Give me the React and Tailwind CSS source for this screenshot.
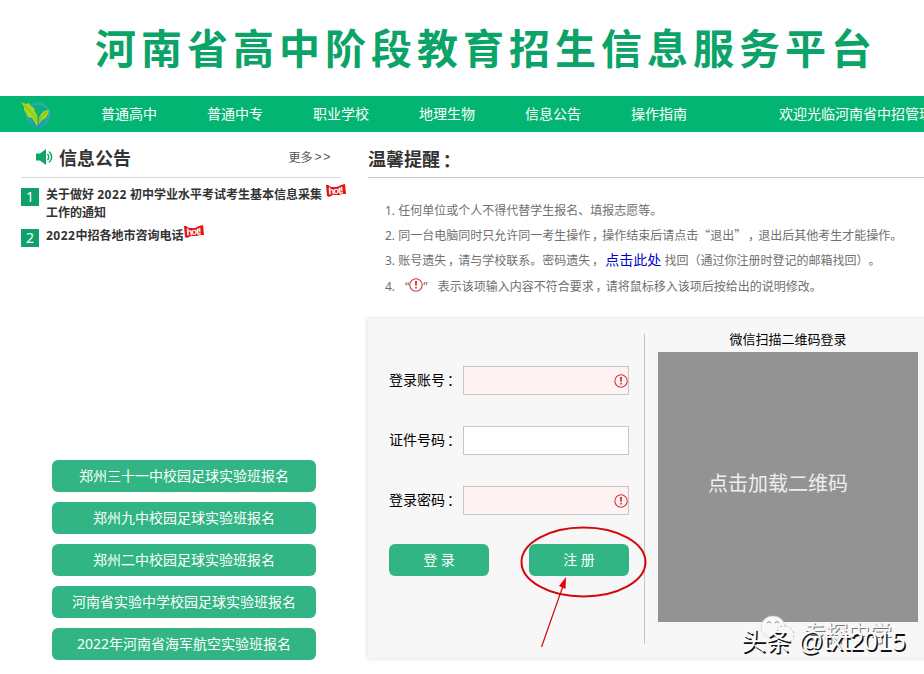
const navItems = ['普通高中', '普通中专', '职业学校', '地理生物', '信息公告', '操作指南'];

const signups = [
  '郑州三十一中校园足球实验班报名',
  '郑州九中校园足球实验班报名',
  '郑州二中校园足球实验班报名',
  '河南省实验中学校园足球实验班报名',
  '2022年河南省海军航空实验班报名',
];

// Centred full-width colon
const Colon = () => (
  <span className="inline-block w-[1em] indent-[0.150em] font-['Noto_Sans_CJK_SC',sans-serif]">：</span>
);

// Full-width comma, centred in its cell
const Comma = () => (
  <span className="inline-block w-[1em] indent-[0.150em] font-['Noto_Sans_CJK_SC',sans-serif]">，</span>
);

// Full-width quotation marks
const Q = ({ children }) => (
  <span className="inline-block w-[1em] font-['Noto_Sans_CJK_SC',sans-serif]">{children}</span>
);

const Logo = () => (
  <svg width="32" height="30" viewBox="0 0 32 30" className="block shrink-0">
    <circle cx="18" cy="15.500" r="11" fill="#12ad82" stroke="#35a9c4" strokeWidth="2.500" opacity="0.750" />
    <path d="M8 21c5 5 14 5 19 0-4 8-15 9-19 0z" fill="#2f8fd0" />
    <path d="M1 3l5 2 3-1 2 3 3 2 1 4 2 3 1 8-1 3-5-8-4-1-2-4-2-3 0-3z" fill="#a5d622" />
    <path d="M29 11l-5 1-3 3-2 4 0 6 3-4 4-2 2-4z" fill="#a5d622" />
    <path d="M4 6l9 9 5 9M27 13l-6 5-3 6" stroke="#6fb31d" strokeWidth="0.800" fill="none" />
  </svg>
);

const Speaker = () => (
  <svg width="17" height="16" viewBox="0 0 17 16" className="-mt-0.5 block">
    <path d="M0 4.500h4L10 0v16l-6-4.500H0z" fill="#0ea56b" />
    <path d="M11.500 5c1.500 1.500 1.500 4.500 0 6M13 2.500c3.500 3 3.500 8 0 11" stroke="#0ea56b" strokeWidth="1.500" fill="none" />
  </svg>
);

const Hot = () => (
  <svg width="20" height="13" viewBox="0 0 20 13" className="-mt-[2px] ml-px inline-block align-top">
    <path d="M0 1l2 0 3 2 6 0 4-2 4-1 1 10-4 0-3 1-6 0-4 2-2-1z" fill="#e01515" />
    <text x="2.500" y="10" fontSize="9.500" fontWeight="bold" fill="#fff" fontFamily="Liberation Sans, sans-serif" transform="rotate(-4 9 6)" textLength="15">hot!</text>
  </svg>
);

const Warn = () => (
  <svg width="14" height="14" viewBox="0 0 14 14" className="block shrink-0">
    <circle cx="7" cy="7" r="6.200" fill="none" stroke="#cf3a3a" strokeWidth="1.100" />
    <path d="M6 3h2l-.4 5h-1.200zM6.200 9h1.600v1.600H6.200z" fill="#d02525" />
  </svg>
);

const Field = ({ label, invalid }) => (
  <div className="flex h-[29px] items-center">
    <label className="w-[74px] pb-0.5 text-sm text-black">{label}<Colon /></label>
    <div className={`flex h-[29px] w-[166px] items-center justify-end border border-[#c6c6c6] ${invalid ? 'bg-[#fff2f2]' : 'bg-white'}`}>
      {invalid && <Warn />}
    </div>
  </div>
);

const News = ({ num, children }) => (
  <li className="flex gap-[7px]">
    <span className="mt-[2px] flex size-[18px] shrink-0 items-center justify-center bg-[#0fa169] text-sm text-white">{num}</span>
    <div className="whitespace-nowrap text-xs/[18px] font-bold text-[#333]">{children}</div>
  </li>
);

const Sidebar = () => (
  <aside className="flex w-[341px] flex-col pl-[21px]">
    <div className="flex h-[46px] items-center border-b border-[#d9d9d9] pt-[6px] pl-[15px]">
      <Speaker />
      <h2 className="ml-[6px] text-lg font-bold text-[#333]">信息公告</h2>
      <a className="mr-[9px] ml-auto flex text-xs text-[#555]">
        更多<span className="ml-0.5 font-['Liberation_Mono',monospace] tracking-[1.500px]">&gt;&gt;</span>
      </a>
    </div>
    <ul className="mt-[8px] flex h-[274px] flex-col gap-[5px]">
      <News num={1}>
        关于做好 <span className="tracking-[0.600px]">2022</span> 初中学业水平考试考生基本信息采集<span className="ml-[3px]"><Hot /></span>
        <br />
        工作的通知
      </News>
      <News num={2}><span className="tracking-[0.500px]">2022</span>中招各地市咨询电话<Hot /></News>
    </ul>
    <div className="ml-[31px] flex w-[264px] flex-col gap-2.5">
      {signups.map((name) => (
        <a key={name} className="flex h-8 items-center justify-center rounded-md bg-[#31b585] text-sm text-white">
          {name}
        </a>
      ))}
    </div>
  </aside>
);

const Notice = () => (
  <section>
    <h2 className="flex h-[46px] items-center border-b border-[#c8c8c8] pt-[8px] text-lg font-bold text-[#333]">
      温馨提醒<Colon />
    </h2>
    <div className="mt-[20px] ml-[17px] whitespace-nowrap text-xs text-[#707070]">
      <p className="h-[24px] leading-[25px]">1. 任何单位或个人不得代替学生报名、填报志愿等。</p>
      <p className="h-[25px] leading-[25px]">
        2. 同一台电脑同时只允许同一考生操作<Comma />操作结束后请点击<Q>“</Q>退出<Q>”</Q><Comma />退出后其他考生才能操作。
      </p>
      <p className="h-[26px] leading-[26px]">
        3. 账号遗失<Comma />请与学校联系。密码遗失<Comma /> <a className="text-sm/[26px] text-[#0000cc]">点击此处</a> 找回<Q>（</Q>通过你注册时登记的邮箱找回<Q>）</Q>。
      </p>
      <div className="flex h-[27px] items-center">
        <span className="w-[20px]">4.</span>
        <span>“</span>
        <span className="-mt-[3px]"><Warn /></span>
        <span className="mr-[10px]">”</span>
        <span>表示该项输入内容不符合要求<Comma />请将鼠标移入该项后按给出的说明修改。</span>
      </div>
    </div>
  </section>
);

const Login = () => (
  <section className="mt-[19px] flex h-[339px] w-[580px] bg-[#f7f7f7] shadow-[0_0_5px_#d8d8d8]">
    <div className="mt-[15px] flex h-[310px] w-[277px] flex-col border-r border-[#c5c5c5] pt-[32px] pl-[21px]">
      <div className="flex flex-col gap-[31px]">
        <Field label="登录账号" invalid />
        <Field label="证件号码" />
        <Field label="登录密码" invalid />
      </div>
      <div className="mt-[29px] flex gap-10">
        <button className="h-8 w-[100px] rounded-md bg-[#31b585] text-sm text-white">登 录</button>
        <button className="h-8 w-[100px] rounded-md bg-[#31b585] text-sm text-white">注 册</button>
      </div>
    </div>
    <div className="ml-[13px] w-[260px]">
      <div className="flex h-[33px] items-center justify-center pt-[9px] text-[13px] text-black">微信扫描二维码登录</div>
      <div className="flex h-[270px] items-center justify-center bg-[#939393] pr-5 pb-[7px] text-xl text-[#eee]">点击加载二维码</div>
    </div>
  </section>
);

// Hand-drawn pointer to the register button
const Marker = () => (
  <svg width="130" height="126" viewBox="0 0 130 126" className="absolute top-[525px] left-[519px]">
    <ellipse cx="64.500" cy="37" rx="62" ry="34.500" fill="none" stroke="#d4080c" strokeWidth="2" />
    <path d="M22.500 122L45 58" stroke="#d4080c" strokeWidth="1.200" />
    <path d="M47 52l-7 9 6.500 3z" fill="#f00000" />
  </svg>
);

const Watermark = () => (
  <div className="absolute top-[614px] left-[742px] h-[46px] w-[180px] whitespace-nowrap">
    <svg width="42" height="36" viewBox="0 0 42 36" className="absolute top-0 left-[18px]">
      <ellipse cx="13" cy="13" rx="12" ry="11" fill="#f8f8f8" stroke="#ccc" strokeWidth="0.600" />
      <path d="M7 9q2-3 4 0M15 9q2-3 4 0" stroke="#888" fill="none" />
      <ellipse cx="24" cy="21" rx="10" ry="9" fill="#f8f8f8" stroke="#aaa" strokeWidth="0.700" strokeDasharray="3 2" />
    </svg>
    <span className="absolute top-[4px] left-[62px] text-[22px]/[28px] text-[#f5f5f5] [text-shadow:1px_1px_0_#777]">专探中学</span>
    <span className="absolute top-[12px] -left-px font-['Liberation_Sans','Noto_Sans_CJK_SC',sans-serif] text-[25px]/[30px] text-[#fafafa] [text-shadow:1.500px_1.500px_0_#111]">
      头条 @txt2015
    </span>
  </div>
);

const App = () => {
  return (
    <div className="relative h-[674px] w-[924px] overflow-hidden bg-white font-['Noto_Sans','Noto_Sans_CJK_SC',sans-serif] [text-spacing-trim:space-all]">
      <header className="flex h-24 items-center pt-px pl-[95px]">
        <h1 className="whitespace-nowrap text-[41px] font-bold tracking-[5px] text-[#0ba368]">河南省高中阶段教育招生信息服务平台</h1>
      </header>
      <nav className="flex h-9 items-center whitespace-nowrap bg-[#03b572] pl-[20px] text-sm text-white">
        <Logo />
        <div className="ml-[49px] flex w-[678px] shrink-0 gap-[50px]">
          {navItems.map((item) => (
            <a key={item}>{item}</a>
          ))}
        </div>
        <span>欢迎光临河南省中招管理</span>
      </nav>
      <main className="flex gap-[27px]">
        <Sidebar />
        <div className="w-[556px]">
          <Notice />
          <Login />
        </div>
      </main>
      <Marker />
      <Watermark />
    </div>
  );
};

export default App;
